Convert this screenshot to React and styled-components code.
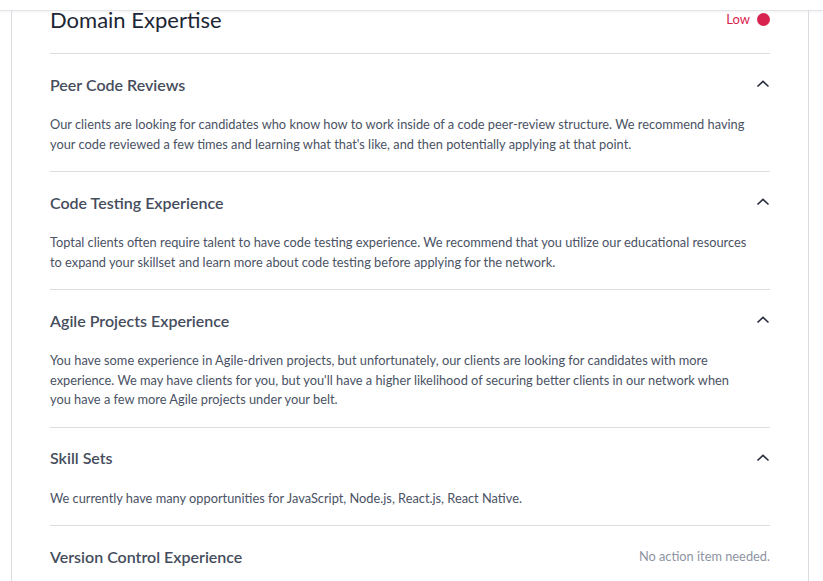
import React from "react";
import styled, { createGlobalStyle } from "styled-components";

const GlobalStyle = createGlobalStyle`
  html, body {
    margin: 0;
    padding: 0;
    background: #ffffff;
    font-family: "Lato", "Open Sans", sans-serif;
  }
`;

const TopBar = styled.div`
  height: 10px;
  background: #ffffff;
  border-bottom: 1px solid #e3e4e8;
  box-shadow: 0 1px 3px rgba(0, 0, 0, 0.06);
`;

const Card = styled.section`
  width: 798px;
  margin-left: 11px;
  border-left: 1px solid #dadbe0;
  border-right: 1px solid #dadbe0;
  padding: 0 38px;
  box-sizing: border-box;
`;

const CardHeader = styled.div`
  display: flex;
  justify-content: space-between;
  align-items: flex-start;
  padding-bottom: 24px;
  border-bottom: 1px solid #dcdde2;
`;

const Heading = styled.h2`
  margin: 0;
  font-size: 22px;
  line-height: 18px;
  font-weight: 400;
  color: #202634;
`;

const Level = styled.div`
  display: flex;
  align-items: center;
  gap: 7px;
  font-size: 13px;
  line-height: 16px;
  color: ${(p) => p.color};
`;

const Dot = styled.span`
  width: 13px;
  height: 13px;
  border-radius: 50%;
  background: ${(p) => p.color};
`;

const Item = styled.div`
  border-bottom: 1px solid #dcdde2;
  padding: 18px 0 17px;
`;

const ItemHead = styled.div`
  display: flex;
  justify-content: space-between;
  align-items: center;
  height: 24px;
`;

const ItemTitle = styled.h3`
  margin: 0;
  font-size: 16px;
  font-weight: 600;
  color: #454d5d;
`;

const Note = styled.span`
  font-size: 12.8px;
  color: #8d94a2;
`;

const Body = styled.p`
  margin: 19px 0 0;
  max-width: 698px;
  font-size: 12.8px;
  line-height: 19.5px;
  color: #4a5264;
`;

const Chevron = () => (
  <svg width="14" height="10" viewBox="0 0 14 10" aria-hidden="true">
    <path d="M1.5 7.5 L7 2.3 L12.5 7.5" fill="none" stroke="#262d3d" strokeWidth="1.6" />
  </svg>
);

const items = [
  {
    title: "Peer Code Reviews",
    body:
      "Our clients are looking for candidates who know how to work inside of a code peer-review structure. We recommend having your code reviewed a few times and learning what that's like, and then potentially applying at that point.",
  },
  {
    title: "Code Testing Experience",
    body:
      "Toptal clients often require talent to have code testing experience. We recommend that you utilize our educational resources to expand your skillset and learn more about code testing before applying for the network.",
  },
  {
    title: "Agile Projects Experience",
    body:
      "You have some experience in Agile-driven projects, but unfortunately, our clients are looking for candidates with more experience. We may have clients for you, but you'll have a higher likelihood of securing better clients in our network when you have a few more Agile projects under your belt.",
  },
  {
    title: "Skill Sets",
    body: "We currently have many opportunities for JavaScript, Node.js, React.js, React Native.",
  },
  {
    title: "Version Control Experience",
    note: "No action item needed.",
  },
];

export default function App() {
  return (
    <>
      <GlobalStyle />
      <TopBar />
      <Card>
        <CardHeader>
          <Heading>Domain Expertise</Heading>
          <Level color="#d8234f">
            Low
            <Dot color="#d8234f" />
          </Level>
        </CardHeader>
        {items.map((it) => (
          <Item key={it.title}>
            <ItemHead>
              <ItemTitle>{it.title}</ItemTitle>
              {it.note ? <Note>{it.note}</Note> : <Chevron />}
            </ItemHead>
            {it.body && <Body>{it.body}</Body>}
          </Item>
        ))}
      </Card>
    </>
  );
}
